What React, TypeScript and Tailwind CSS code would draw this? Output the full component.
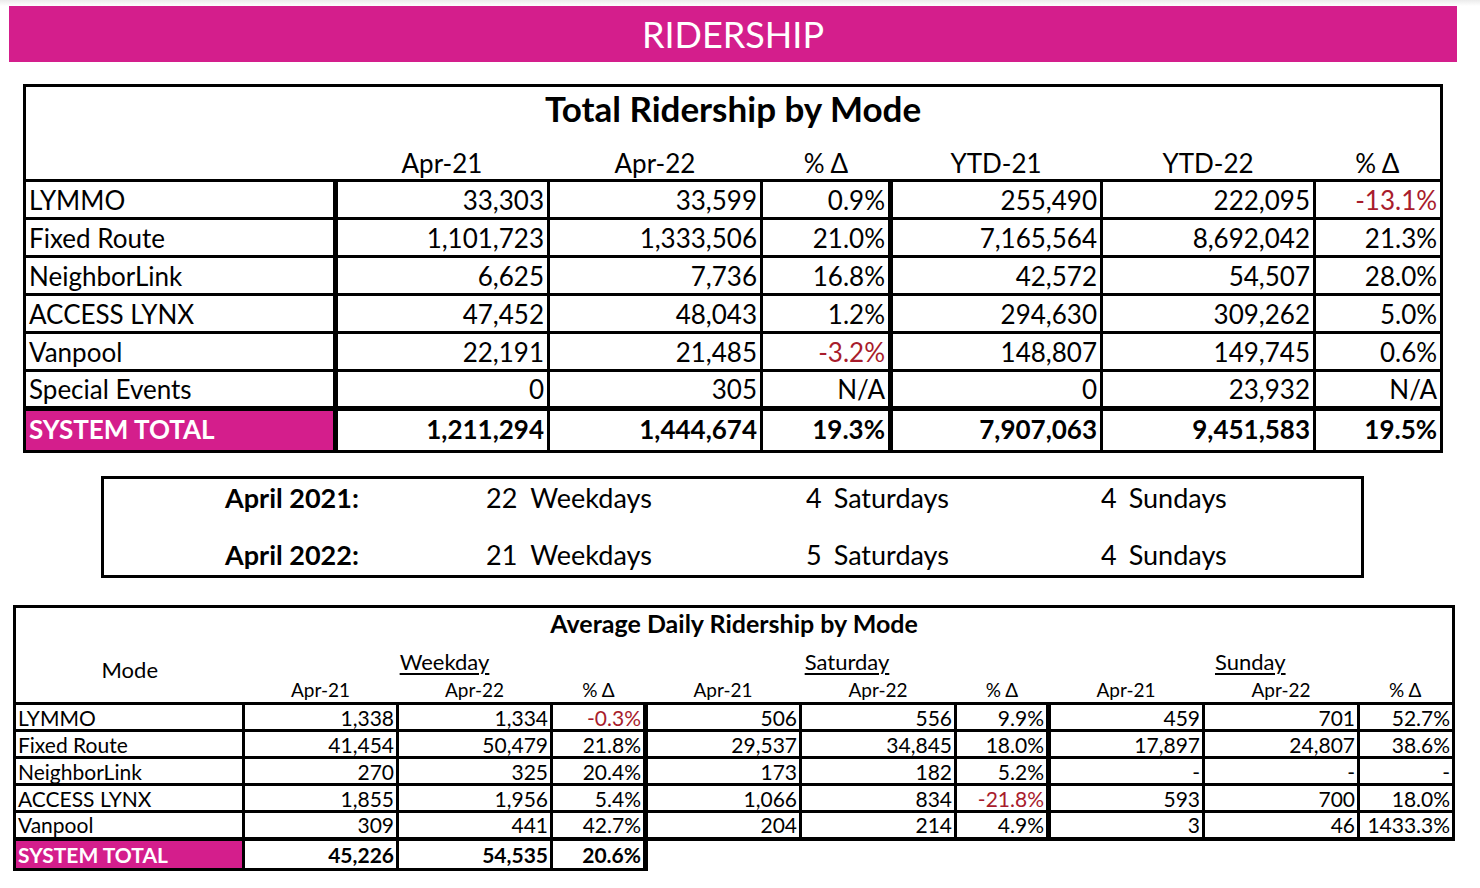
import React from 'react';

const totalRows = [
  ['LYMMO', '33,303', '33,599', '0.9%', '255,490', '222,095', '-13.1%'],
  ['Fixed Route', '1,101,723', '1,333,506', '21.0%', '7,165,564', '8,692,042', '21.3%'],
  ['NeighborLink', '6,625', '7,736', '16.8%', '42,572', '54,507', '28.0%'],
  ['ACCESS LYNX', '47,452', '48,043', '1.2%', '294,630', '309,262', '5.0%'],
  ['Vanpool', '22,191', '21,485', '-3.2%', '148,807', '149,745', '0.6%'],
  ['Special Events', '0', '305', 'N/A', '0', '23,932', 'N/A'],
];
const totalSum = ['SYSTEM TOTAL', '1,211,294', '1,444,674', '19.3%', '7,907,063', '9,451,583', '19.5%'];

const dailyRows = [
  ['LYMMO', '1,338', '1,334', '-0.3%', '506', '556', '9.9%', '459', '701', '52.7%'],
  ['Fixed Route', '41,454', '50,479', '21.8%', '29,537', '34,845', '18.0%', '17,897', '24,807', '38.6%'],
  ['NeighborLink', '270', '325', '20.4%', '173', '182', '5.2%', '-', '-', '-'],
  ['ACCESS LYNX', '1,855', '1,956', '5.4%', '1,066', '834', '-21.8%', '593', '700', '18.0%'],
  ['Vanpool', '309', '441', '42.7%', '204', '214', '4.9%', '3', '46', '1433.3%'],
];
const dailySum = ['SYSTEM TOTAL', '45,226', '54,535', '20.6%'];

const isNeg = (v: string) => v.startsWith('-') && v.length > 1;

function TotalTable() {
  const heads = ['Apr-21', 'Apr-22', '% Δ', 'YTD-21', 'YTD-22', '% Δ'];
  return (
    <table className="ml-[23px] mt-[22px] w-[1417px] table-fixed border-collapse border-[3px] border-black text-[26px]">
      <colgroup>
        <col className="w-[311px]" />
        <col className="w-[213px]" />
        <col className="w-[213px]" />
        <col className="w-[129px]" />
        <col className="w-[211px]" />
        <col className="w-[213px]" />
        <col className="w-[127px]" />
      </colgroup>
      <tbody>
        <tr>
          <td colSpan={7} className="h-[50px] pb-[5px] text-center text-[35px] font-bold leading-none">
            Total Ridership by Mode
          </td>
        </tr>
        <tr>
          <td className="h-[45px]" />
          {heads.map((h, i) => (
            <td key={i} className="h-[45px] align-bottom pb-[3px] text-center leading-none">
              {h}
            </td>
          ))}
        </tr>
        {totalRows.map((r) => (
          <tr key={r[0]}>
            {r.map((v, i) => (
              <td
                key={i}
                className={
                  'h-[38px] border-[3px] border-black leading-none ' +
                  (i === 0 ? 'border-r-[5px] pl-[3px] text-left ' : 'pr-[3px] text-right ') +
                  (i === 3 ? 'border-r-[5px] ' : '') +
                  (isNeg(v) ? 'text-[#a81c2c]' : '')
                }
              >
                {v}
              </td>
            ))}
          </tr>
        ))}
        <tr>
          {totalSum.map((v, i) => (
            <td
              key={i}
              className={
                'h-[43px] border-[3px] border-t-[5px] border-black pb-[3px] font-bold leading-none ' +
                (i === 0 ? 'border-r-[5px] bg-[#d41e8c] pl-[3px] text-left text-white ' : 'pr-[3px] text-right ') +
                (i === 3 ? 'border-r-[5px] ' : '')
              }
            >
              {v}
            </td>
          ))}
        </tr>
      </tbody>
    </table>
  );
}

function DaysBox() {
  const lines = [
    ['April 2021:', '22', 'Weekdays', '4', 'Saturdays', '4', 'Sundays'],
    ['April 2022:', '21', 'Weekdays', '5', 'Saturdays', '4', 'Sundays'],
  ];
  return (
    <div className="ml-[101px] mt-[23px] flex h-[102px] w-[1263px] flex-col justify-between border-[3px] border-black pt-[3px] pb-[6px] text-[27px]">
      {lines.map((l) => (
        <div key={l[0]} className="flex h-[30px] items-center pl-[121px] leading-none">
          <span className="w-[261px] font-bold">{l[0]}</span>
          <span className="w-[320px]">
            {l[1]}
            <span className="ml-[13px]">{l[2]}</span>
          </span>
          <span className="w-[295px]">
            {l[3]}
            <span className="ml-[12px]">{l[4]}</span>
          </span>
          <span>
            {l[5]}
            <span className="ml-[12px]">{l[6]}</span>
          </span>
        </div>
      ))}
    </div>
  );
}

function DailyTable() {
  const sub = ['Apr-21', 'Apr-22', '% Δ', 'Apr-21', 'Apr-22', '% Δ', 'Apr-21', 'Apr-22', '% Δ'];
  const thick = (i: number) => (i === 3 || i === 6 ? 'border-r-[5px] ' : '');
  return (
    <table className="ml-[13px] mt-[27px] w-[1439px] table-fixed border-collapse text-[21px]">
      <colgroup>
        <col className="w-[229px]" />
        <col className="w-[154px]" />
        <col className="w-[154px]" />
        <col className="w-[94px]" />
        <col className="w-[155px]" />
        <col className="w-[155px]" />
        <col className="w-[93px]" />
        <col className="w-[155px]" />
        <col className="w-[155px]" />
        <col className="w-[95px]" />
      </colgroup>
      <tbody>
        <tr>
          <td
            colSpan={10}
            className="h-[40px] border-x-[3px] border-t-[3px] border-black pt-[3px] align-top text-center text-[25px] font-bold leading-none"
          >
            Average Daily Ridership by Mode
          </td>
        </tr>
        <tr>
          <td rowSpan={2} className="border-l-[3px] border-black pb-[8px] text-center text-[22px] leading-none">
            Mode
          </td>
          <td colSpan={3} className="h-[30px] text-center text-[22px] leading-none underline decoration-[1.5px] underline-offset-[3px]">
            Weekday
          </td>
          <td colSpan={3} className="text-center text-[22px] leading-none underline decoration-[1.5px] underline-offset-[3px]">
            Saturday
          </td>
          <td colSpan={3} className="border-r-[3px] border-black text-center text-[22px] leading-none underline decoration-[1.5px] underline-offset-[3px]">
            Sunday
          </td>
        </tr>
        <tr>
          {sub.map((h, i) => (
            <td
              key={i}
              className={
                'h-[27px] text-center text-[19px] leading-none ' + (i === 8 ? 'border-r-[3px] border-black' : '')
              }
            >
              {h}
            </td>
          ))}
        </tr>
        {dailyRows.map((r, ri) => (
          <tr key={r[0]}>
            {r.map((v, i) => (
              <td
                key={i}
                className={
                  'h-[27px] border-[3px] border-black leading-none ' +
                  (i === 0 ? 'pl-[2px] text-left ' : 'pr-[2px] text-right ') +
                  thick(i) +
                  (ri === dailyRows.length - 1 ? 'border-b-[4px] ' : '') +
                  (isNeg(v) ? 'text-[#a81c2c]' : '')
                }
              >
                {v}
              </td>
            ))}
          </tr>
        ))}
        <tr>
          {dailySum.map((v, i) => (
            <td
              key={i}
              className={
                'h-[31px] border-[3px] border-black font-bold leading-none ' +
                (i === 0 ? 'bg-[#d41e8c] pl-[2px] text-left text-white ' : 'pr-[2px] text-right ') +
                thick(i)
              }
            >
              {v}
            </td>
          ))}
          <td colSpan={6} />
        </tr>
      </tbody>
    </table>
  );
}

export default function App() {
  return (
    <div className="h-[888px] w-[1480px] overflow-hidden bg-white font-[Lato,sans-serif] text-black">
      <div className="h-[6px] bg-gradient-to-b from-[#ebebeb] to-white" />
      <div className="ml-[9px] flex h-[56px] w-[1448px] items-center justify-center bg-[#d41e8c] text-[36px] leading-none text-white">
        RIDERSHIP
      </div>
      <TotalTable />
      <DaysBox />
      <DailyTable />
    </div>
  );
}
